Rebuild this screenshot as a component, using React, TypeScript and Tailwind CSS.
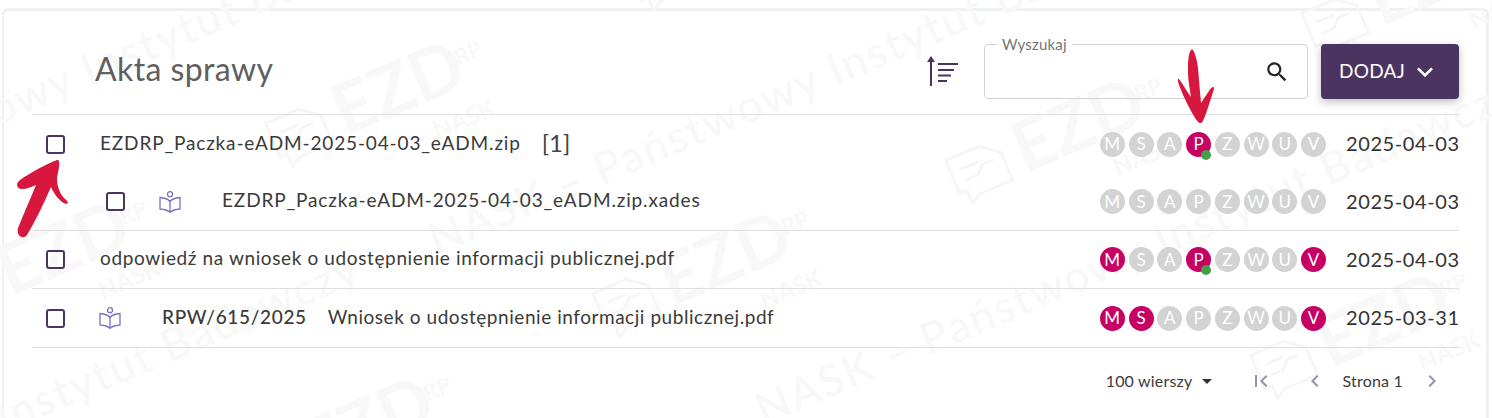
import React from 'react';

const FONT = "font-['Lato','Noto_Sans',sans-serif]";

const LETTERS = ['M', 'S', 'A', 'P', 'Z', 'W', 'U', 'V'];

type Row = {
  active: string[];
  dot?: boolean;
  date: string;
};

const Badges: React.FC<Row> = ({ active, dot, date }) => (
  <div className="ml-auto flex items-center">
    <div className="flex gap-[3.75px]">
      {LETTERS.map((l) => (
        <span
          key={l}
          className={`relative flex h-[25px] w-[25px] items-center justify-center rounded-full text-[17px] text-white ${
            active.includes(l) ? 'bg-[#c70063]' : 'bg-[#d3d3d3]'
          }`}
        >
          {l}
          {dot && l === 'P' && (
            <span className="absolute left-[15px] top-[18px] h-[10px] w-[10px] rounded-full bg-[#43a047]" />
          )}
        </span>
      ))}
    </div>
    <span className="ml-[20px] -mt-[2px] w-[113px] whitespace-nowrap text-right text-[20px] tracking-[0.6px] text-[#333333]">{date}</span>
  </div>
);

const Check: React.FC = () => (
  <span className="block h-[19px] w-[19px] shrink-0 rounded-[3px] border-2 border-[#4b3560]" />
);

const BookIcon: React.FC = () => (
  <svg width="22" height="22" viewBox="0 0 22 22" fill="none" stroke="#7d6fc6" strokeWidth="1.3" className="shrink-0">
    <circle cx="11" cy="3.2" r="2.5" />
    <path d="M11 10.5C9 8 6 6.8 1 6.5V18C6 18.3 9 19.5 11 21.3C13 19.5 16 18.3 21 18V6.5C16 6.8 13 8 11 10.5Z" />
    <path d="M11 10.5V21.3" />
  </svg>
);

const Watermark: React.FC<{ x: number; y: number; text: string }> = ({ x, y, text }) => (
  <span
    className="absolute origin-left -rotate-[23deg] whitespace-nowrap text-[44px] font-medium tracking-[2px] text-[#f8f8f8]"
    style={{ left: x, top: y }}
  >
    {text}
  </span>
);

const Logo: React.FC<{ x: number; y: number }> = ({ x, y }) => (
  <div className="absolute h-[90px] w-[240px] origin-center -rotate-[23deg] text-[#f8f8f8]" style={{ left: x, top: y }}>
    <svg width="62" height="62" viewBox="0 0 62 62" fill="none" stroke="#f6f6f6" strokeWidth="3" className="absolute left-[-2px] top-[5px]">
      <path d="M4 10H40L58 24V54H22L12 60V46H4Z" />
      <path d="M14 24H34M14 36H28L36 28H48" />
    </svg>
    <span className="absolute left-[70px] top-[-4px] text-[70px] font-bold leading-none">EZD</span>
    <span className="absolute left-[202px] top-[18px] text-[22px] font-bold leading-none">RP</span>
    <span className="absolute left-[154px] top-[76px] text-[24px] font-bold leading-none">NASK</span>
  </div>
);

const App: React.FC = () => {
  return (
    <div className={`relative h-[418px] w-[1492px] overflow-hidden bg-white ${FONT}`}>
      <div className="mt-[8px] ml-[2px] w-[1487px] h-[420px] rounded-[6px] border-t-[3px] border-l-[2px] border-r-[3px] border-[#eef1f1] bg-white">
        <div className="relative pl-[28px] pr-[27px]">
          {/* watermark */}
          <div className="pointer-events-none absolute -left-[4px] -top-[11px] h-[418px] w-[1492px]">
            <Watermark x={-316} y={207} text="NASK – Państwowy Instytut Badawczy" />
            <Watermark x={430} y={207} text="NASK – Państwowy Instytut Badawczy" />
            <Watermark x={757} y={377} text="NASK – Państwowy Instytut Badawczy" />
            <Watermark x={-402} y={554} text="NASK – Państwowy Instytut Badawczy" />
            <Logo x={266} y={60} />
            <Logo x={-69} y={220} />
            <Logo x={593} y={230} />
            <Logo x={946} y={97} />
            <Logo x={1251} y={292} />
            <Logo x={1302} y={-50} />
            <Logo x={627} y={-96} />
            <Logo x={235} y={396} />
          </div>

          <div className="relative">
            {/* header */}
            <div className="flex h-[104px] items-start border-b border-[#e0e0e0] pt-[33px]">
              <h1 className="ml-[63px] mt-[1px] text-[32px] leading-[48px] tracking-[0.4px] text-[#5f5f5f]">Akta sprawy</h1>
              <div className="ml-auto flex items-start">
                <svg width="32" height="32" viewBox="0 0 32 32" fill="none" stroke="#4b3560" className="mt-[11px]">
                  <path d="M4 31V2" strokeWidth="2" />
                  <path d="M0 7L4 1L8 7Z" fill="#4b3560" stroke="none" />
                  <path d="M11 9H31M11 15H27M11 20.5H24M11 26H20" strokeWidth="2" />
                </svg>
                <div className="relative ml-[25px] flex h-[55px] w-[324px] items-center justify-end rounded-[4px] border border-[#d2d2d2] pr-[17px]">
                  <span className="absolute -top-[10px] left-[12px] bg-white px-[5px] text-[15px] leading-[18px] tracking-[0.2px] text-[#757575]">Wyszukaj</span>
                  <svg width="26" height="26" viewBox="0 0 24 24" fill="#222222">
                    <path d="M15.5 14h-.79l-.28-.27C15.41 12.59 16 11.11 16 9.5 16 5.91 13.09 3 9.5 3S3 5.91 3 9.5 5.91 16 9.5 16c1.61 0 3.09-.59 4.23-1.57l.27.28v.79l5 4.99L20.49 19l-4.99-5zm-6 0C7.01 14 5 11.99 5 9.5S7.01 5 9.5 5 14 7.01 14 9.5 11.99 14 9.5 14z" />
                  </svg>
                </div>
                <button className="ml-[13px] flex h-[55px] w-[138px] items-center justify-center gap-[4px] rounded-[4px] bg-[#4b3560] text-[19px] tracking-[0.3px] text-white shadow-[0_3px_8px_rgba(0,0,0,0.25)]">
                  DODAJ
                  <svg width="32" height="32" viewBox="0 0 24 24" fill="white">
                    <path d="M16.59 8.59 12 13.17 7.41 8.59 6 10l6 6 6-6z" />
                  </svg>
                </button>
              </div>
            </div>

            {/* rows */}
            <div className="text-[19px] text-[#3a3a3a]">
              <div className="flex h-[58px] items-center pl-[14px]">
                <Check />
                <span className="ml-[35px] -mt-[2px] tracking-[0.85px]">EZDRP_Paczka-eADM-2025-04-03_eADM.zip</span>
                <span className="ml-[21px] -mt-[2px] text-[24px] text-[#444444]">[1]</span>
                <Badges active={['P']} dot date="2025-04-03" />
              </div>
              <div className="flex h-[58px] items-center border-b border-[#e0e0e0] pl-[74px]">
                <Check />
                <span className="ml-[34px]"><BookIcon /></span>
                <span className="ml-[41px] -mt-[2px] tracking-[0.86px]">EZDRP_Paczka-eADM-2025-04-03_eADM.zip.xades</span>
                <Badges active={[]} date="2025-04-03" />
              </div>
              <div className="flex h-[58px] items-center border-b border-[#e0e0e0] pl-[14px]">
                <Check />
                <span className="ml-[35px] -mt-[2px] tracking-[0.62px]">odpowiedź na wniosek o udostępnienie informacji publicznej.pdf</span>
                <Badges active={['M', 'P', 'V']} dot date="2025-04-03" />
              </div>
              <div className="flex h-[59px] items-center border-b border-[#e0e0e0] pl-[14px]">
                <Check />
                <span className="ml-[34px]"><BookIcon /></span>
                <span className="ml-[41px] -mt-[2px] font-medium tracking-[0.67px]">RPW/615/2025</span>
                <span className="ml-[21px] -mt-[2px] tracking-[0.55px]">Wniosek o udostępnienie informacji publicznej.pdf</span>
                <Badges active={['M', 'S', 'V']} date="2025-03-31" />
              </div>
            </div>

            {/* pagination */}
            <div className="flex h-[66px] items-center justify-end pr-[15px] text-[16px] tracking-[0.2px] text-[#3a3a3a]">
              <span>100 wierszy</span>
              <svg width="24" height="24" viewBox="0 0 24 24" fill="#333333" className="ml-[2px]"><path d="M7 10l5 5 5-5z" /></svg>
              <svg width="24" height="24" viewBox="0 0 24 24" fill="#9a8fa8" className="ml-[30px]"><path d="M18.41 16.59 13.82 12l4.59-4.59L17 6l-6 6 6 6zM6 6h2v12H6z" /></svg>
              <svg width="24" height="24" viewBox="0 0 24 24" fill="#9a8fa8" className="ml-[30px]"><path d="M15.41 7.41 14 6l-6 6 6 6 1.41-1.41L10.83 12z" /></svg>
              <span className="ml-[16px]">Strona 1</span>
              <svg width="24" height="24" viewBox="0 0 24 24" fill="#9a8fa8" className="ml-[17px]"><path d="M10 6 8.59 7.41 13.17 12l-4.58 4.59L10 18l6-6z" /></svg>
            </div>
          </div>
        </div>
      </div>

      {/* hand drawn arrows */}
      <svg width="1492" height="418" viewBox="0 0 1492 418" className="pointer-events-none absolute left-0 top-0" fill="#d8173f">
        <path d="M57 160C44 165 30 173 20 180C15 184 17 189 22 189C27 189 31 187 36 185C30 200 23 215 18 228C16 236 23 240 27 235C35 222 44 203 51 187C54 194 60 202 66 204C69 204 68 201 65 199C60 194 57 187 57 178C58 172 60 165 59 162C59 160 58 160 57 160Z" />
        <path d="M1192 49C1188 52 1188 62 1188 72C1188 80 1190 90 1191 97C1187 92 1183 84 1179 79C1177 78 1178 82 1179 85C1184 98 1192 114 1198 122C1200 124 1202 123 1203 121C1207 112 1211 98 1214 89C1214 85 1211 88 1209 91C1206 95 1203 100 1201 103C1200 92 1199 80 1198 68C1197 60 1195 52 1192 49Z" />
      </svg>
    </div>
  );
};

export default App;
